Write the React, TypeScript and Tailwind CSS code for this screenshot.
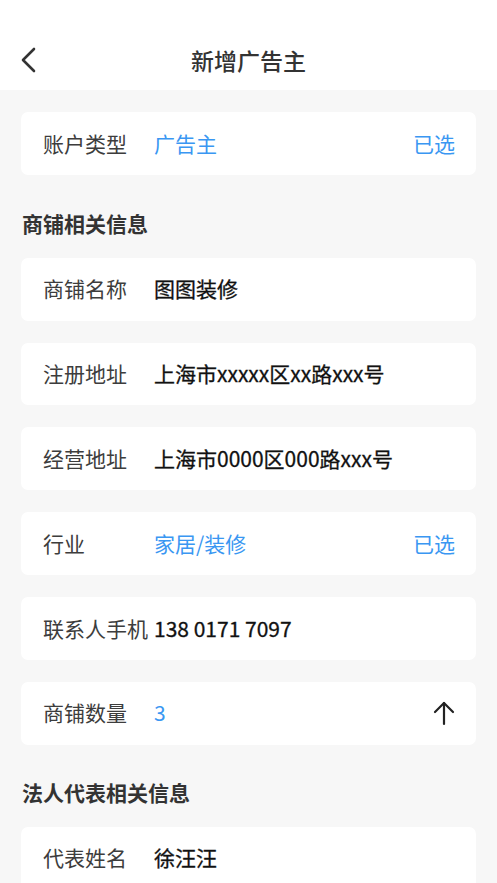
import React from 'react';

const font = { fontFamily: '"Noto Sans CJK SC", "Noto Sans", sans-serif' };

const shopRows = [
  { label: '商铺名称', value: '图图装修' },
  { label: '注册地址', value: '上海市xxxxx区xx路xxx号' },
  { label: '经营地址', value: '上海市0000区000路xxx号' },
];

function Row({
  label,
  value,
  blue,
  right,
}: {
  label: string;
  value: string;
  blue?: boolean;
  right?: React.ReactNode;
}) {
  return (
    <div className="mx-[21px] h-[62.8px] flex items-center rounded-[7px] bg-white pl-[22px] pr-[21px]">
      <div className="w-[111px] shrink-0 text-[21px] text-[#3d3d3d] whitespace-nowrap">{label}</div>
      <div
        className={`flex-1 text-[21px] whitespace-nowrap ${
          blue ? 'text-[#3a97f2]' : 'text-[#111] [-webkit-text-stroke:0.3px_#111]'
        }`}
      >
        {value}
      </div>
      {right}
    </div>
  );
}

const Picked = () => <div className="text-[21px] text-[#3a97f2]">已选</div>;

const ArrowUp = () => (
  <svg width="22" height="26" viewBox="0 0 22 26" fill="none" stroke="#222" strokeWidth="2.2" strokeLinecap="round" strokeLinejoin="round">
    <path d="M11 3 V24" />
    <path d="M2 12 L11 3 L20 12" />
  </svg>
);

export default function App() {
  return (
    <div className="min-h-screen bg-[#f7f7f7] text-[#333]" style={font}>
      {/* Header */}
      <div className="h-[90px] bg-white relative flex items-end justify-center pb-[13px]">
        <button className="absolute left-[20px] top-[46px]">
          <svg width="18" height="28" viewBox="0 0 18 28" fill="none" stroke="#333" strokeWidth="2.6" strokeLinecap="round" strokeLinejoin="round">
            <path d="M14 3 L3 14 L14 25" />
          </svg>
        </button>
        <h1 className="text-[23px] font-medium text-[#333]">新增广告主</h1>
      </div>

      <div className="pt-[22px]">
        <Row label="账户类型" value="广告主" blue right={<Picked />} />

        <h2 className="mt-[35px] mb-[22px] px-[22px] text-[21px] font-bold text-[#333] leading-[26px]">商铺相关信息</h2>

        <div className="flex flex-col gap-[22px]">
          {shopRows.map((r) => (
            <Row key={r.label} label={r.label} value={r.value} />
          ))}
          <Row label="行业" value="家居/装修" blue right={<Picked />} />
          <Row label="联系人手机" value="138 0171 7097" />
          <Row label="商铺数量" value="3" blue right={<ArrowUp />} />
        </div>

        <h2 className="mt-[34px] mb-[22px] px-[22px] text-[21px] font-bold text-[#333] leading-[26px]">法人代表相关信息</h2>

        <div className="flex flex-col gap-[22px] pb-[22px]">
          <Row label="代表姓名" value="徐汪汪" />
        </div>
      </div>
    </div>
  );
}
